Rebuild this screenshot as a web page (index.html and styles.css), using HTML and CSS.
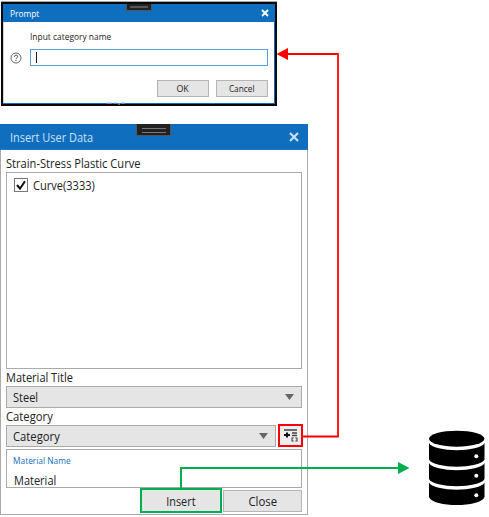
FILE: index.html
```html
<!DOCTYPE html>
<html lang="en">
<head>
<meta charset="utf-8">
<title>Insert User Data</title>
<link rel="stylesheet" href="styles.css">
</head>
<body>
<main class="stage">
  <section class="prompt">
    <header class="prompt-head">
      <span class="t-prompt">Prompt</span>
      <i class="grip grip-small"></i>
      <svg class="x-small" viewBox="0 0 8 8"><path d="M1 1l6 6M7 1l-6 6" stroke="#fff" stroke-width="1.9"/></svg>
    </header>
    <div class="prompt-label"><span class="t-label">Input category name</span></div>
    <div class="prompt-row">
      <svg class="help" viewBox="0 0 12 12"><circle cx="6" cy="6" r="5" fill="none" stroke="#555" stroke-width=".9"/><path d="M4.400 4.800c0-2.200 3.300-2.100 3.300-.2C7.700 5.800 6 5.800 6 7.200M6 8v1.100" fill="none" stroke="#444"/></svg>
      <div class="prompt-input"><i class="caret"></i></div>
    </div>
    <div class="prompt-buttons">
      <button class="small-button"><span class="t-ok">OK</span></button>
      <button class="small-button"><span class="t-cancel">Cancel</span></button>
    </div>
    <svg class="remnant" viewBox="0 0 24 3"><path d="M1 1h5M8 1h3M12 2h2M15 1h4" stroke="#b5b5b5" stroke-width="1.2"/></svg>
  </section>

  <section class="dialog">
    <header class="dialog-head">
      <span class="t-title">Insert User Data</span>
      <i class="grip"></i>
      <svg class="x-large" viewBox="0 0 10 10"><path d="M1 1l8 8M9 1l-8 8" stroke="#c9e0f4" stroke-width="2.1"/></svg>
    </header>
    <div class="dialog-body">
      <div class="field-label first"><span class="t-curve">Strain-Stress Plastic Curve</span></div>
      <div class="list">
        <div class="item">
          <svg class="check" viewBox="0 0 14 14"><rect x=".5" y=".5" width="13" height="13" fill="#fff" stroke="#777"/><path d="M3 7l3 3.500L11 3.200" fill="none" stroke="#111" stroke-width="2"/></svg>
          <span class="t-item">Curve(3333)</span>
        </div>
      </div>
      <div class="field-label"><span class="t-mtitle">Material Title</span></div>
      <div class="select"><span class="t-steel">Steel</span><i class="arrow"></i></div>
      <div class="field-label"><span class="t-cat">Category</span></div>
      <div class="category-row">
        <div class="select"><span class="t-cat">Category</span><i class="arrow"></i></div>
        <button class="add">
          <svg viewBox="0 0 14 13"><path d="M0 1h13M8 4h5M8 6.500h5" stroke="#444" stroke-width="1.3"/><path d="M0 6h6M3 3.500v5" stroke="#111" stroke-width="2"/><path d="M9.700 9H8v3h1.700M11.300 9H13v3h-1.700" fill="none" stroke="#444" stroke-width="1.100"/></svg>
        </button>
      </div>
      <div class="name-box">
        <div class="name-label"><span class="t-mname">Material Name</span></div>
        <div class="name-value"><span class="t-material">Material</span></div>
      </div>
      <div class="actions">
        <button class="button insert"><span class="t-insert">Insert</span></button>
        <button class="button"><span class="t-close">Close</span></button>
      </div>
    </div>
  </section>

  <svg class="overlay" viewBox="0 0 489 517">
    <path d="M303 436.500H338V54H287" fill="none" stroke="#f00" stroke-width="1.800"/>
    <path d="M276.500 54l11.500-6v12z" fill="#f00"/>
    <path d="M181 489V468H399" fill="none" stroke="#00b050" stroke-width="2"/>
    <path d="M409.500 468l-11.500-6v12z" fill="#00b050"/>
    <g fill="#000">
      <ellipse cx="456.700" cy="438.700" rx="27.700" ry="8"/>
      <path d="M429 443c4 9.500 51.500 9.500 55.500 0v16.500c-4 9.500-51.500 9.500-55.500 0z"/>
      <path d="M429 463c4 9.500 51.500 9.500 55.500 0v16c-4 9.500-51.500 9.500-55.500 0z"/>
      <path d="M429 482.500c4 9.500 51.500 9.500 55.500 0v14.500c-4 10.700-51.500 10.700-55.500 0z"/>
    </g>
    <g fill="#fff"><circle cx="476.300" cy="456.300" r="2"/><circle cx="476.300" cy="475.700" r="2"/><circle cx="476.300" cy="495.300" r="2"/></g>
  </svg>
</main>
</body>
</html>
```
FILE: styles.css
```css
* { box-sizing: border-box; }
body { margin: 0; background: #fff; color: #222; font-family: "Open Sans", "Noto Sans", sans-serif; }
button { margin: 0; padding: 0; font: inherit; color: inherit; }
svg { display: block; }
span { display: inline-block; white-space: nowrap; transform: scaleX(.88); transform-origin: left center; }
.t-curve { transform: scaleX(.89); }
.t-title { transform: scaleX(.875); }
.t-item { transform: scaleX(.885); }
.t-cat { transform: scaleX(.9); }
button span { transform: scaleX(.87); transform-origin: center; }
.t-close { transform: scaleX(.91); }
.t-ok { transform: scaleX(.93); }

.stage { position: relative; width: 489px; height: 517px; padding: 2px 0 0 1px; overflow: hidden; }

.prompt { position: relative; width: 276px; height: 104px; border: 2px solid #080808; box-shadow: 0 -1px #aaa, inset -1px -1px #106ebe, inset 1px 0 #c9d9e6; font-size: 9.5px; }
.prompt-head { position: relative; display: flex; align-items: center; justify-content: space-between; height: 18px; padding: 0 6px 0 7px; background: #106ebe; color: #fff; }
.grip { position: absolute; left: 136px; top: 0; width: 35px; height: 12px; background: #222; border: 1px solid #555; border-top: 0; }
.grip::after { content: ""; position: absolute; left: 5px; right: 4px; top: 4px; height: 3px; border: solid #777; border-width: 1px 0; }
.grip-small { left: 123px; width: 26px; height: 7px; }
.grip-small::after { left: 3px; right: 3px; top: 2px; height: 2px; border: 0; background: #555; }
.x-small { width: 8px; height: 8px; }
.prompt-label { display: flex; align-items: center; height: 27px; padding: 1px 0 0 27px; }
.t-label { transform: scaleX(.885); }
.prompt-row { display: flex; align-items: center; gap: 8px; height: 17px; padding-left: 7px; }
.help { width: 12px; height: 12px; }
.prompt-input { width: 238px; height: 17px; border: 1px solid #569de5; padding: 2px 0 0 5px; }
.caret { display: block; width: 1px; height: 11px; background: #222; }
.prompt-buttons { display: flex; justify-content: flex-end; gap: 7px; margin-top: 14px; padding-right: 7px; }
.small-button { width: 52px; height: 17px; background: #e5e5e5; border: 1px solid #b5b5b5; display: flex; align-items: center; justify-content: center; }
.remnant { position: absolute; left: 103px; bottom: -1px; width: 24px; height: 3px; }

.dialog { width: 308px; height: 391px; margin: 18px 0 0 -1px; border: 1px solid #aaa; border-top: 0; font-size: 12.5px; }
.dialog-head { position: relative; display: flex; align-items: center; justify-content: space-between; height: 26px; margin: 0 -1px; padding: 1px 9px 0 10px; background: #106ebe; border-bottom: 1px solid #1e78c8; color: #c9e0f4; }
.x-large { width: 10px; height: 10px; }
.dialog-body { padding: 0 5px; }
.field-label { display: flex; align-items: center; height: 17px; }
.field-label.first { height: 22px; padding-top: 5px; }
.list { height: 197px; border: 1px solid #aaa; padding: 5px 7px; }
.item { display: flex; align-items: center; gap: 5px; height: 14px; }
.check { width: 14px; height: 14px; }
.select { display: flex; align-items: center; justify-content: space-between; flex: 1; height: 22px; padding: 0 7px 0 6px; background: #e5e5e5; border: 1px solid #aaa; }
.arrow { width: 9px; height: 6px; background: #666; clip-path: polygon(0 0, 100% 0, 50% 100%); }
.category-row { display: flex; gap: 2px; width: 297px; }
.add { display: flex; align-items: center; justify-content: center; width: 25px; height: 23px; margin-top: -1px; background: #eee; border: 2px solid #f00; }
.add svg { width: 14px; height: 13px; }
.name-box { height: 39px; margin-top: 2px; border: 1px solid #aaa; }
.name-label { display: flex; align-items: center; height: 21px; padding-left: 6px; color: #106ebe; font-size: 9.5px; }
.name-value { display: flex; align-items: center; height: 17px; padding: 1px 0 0 7px; }
.actions { display: flex; justify-content: flex-end; align-items: center; gap: 1px; height: 25px; }
.button { display: flex; align-items: center; justify-content: center; width: 79px; height: 22px; padding-top: 2px; background: #e5e5e5; border: 1px solid #b5b5b5; }
.insert { width: 82px; height: 25px; border: 2px solid #00b050; }
.overlay { position: absolute; left: 0; top: 0; width: 489px; height: 517px; pointer-events: none; }
```
